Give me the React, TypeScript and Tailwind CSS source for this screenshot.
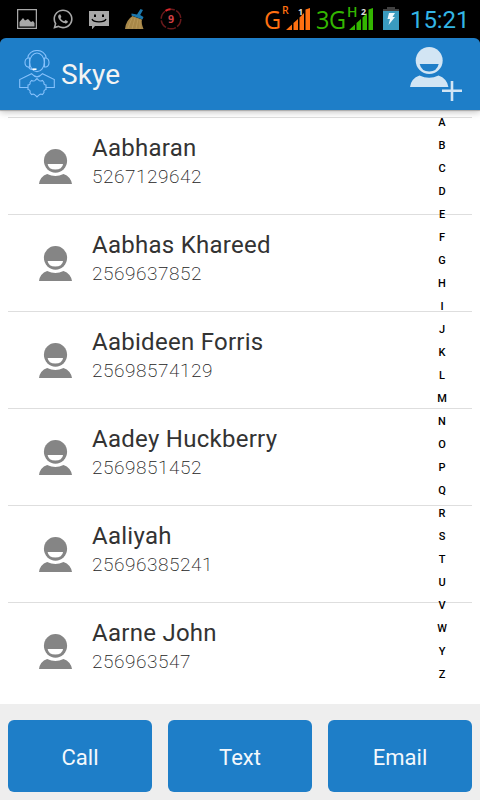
import { FaWhatsapp } from "react-icons/fa";

const contacts = [
  { name: "Aabharan", phone: "5267129642" },
  { name: "Aabhas Khareed", phone: "2569637852" },
  { name: "Aabideen Forris", phone: "25698574129" },
  { name: "Aadey Huckberry", phone: "2569851452" },
  { name: "Aaliyah", phone: "25696385241" },
  { name: "Aarne John", phone: "256963547" },
];

const letters = "ABCDEFGHIJKLMNOPQRSTUVWYZ".split("");
const actions = ["Call", "Text", "Email"];

function SignalBars({ className }: { className: string }) {
  return (
    <svg width="24" height="22" viewBox="0 0 24 22" className={className} fill="currentColor">
      <path d="M0 22 6 16.5V22ZM7.5 15 12 11V22H7.5ZM13.5 9.5 18 5V22H13.5ZM19.5 1.5 24 0V22H19.5Z" />
    </svg>
  );
}

function StatusBar() {
  return (
    <div className="flex h-[38px] shrink-0 items-start bg-black">
      <div className="flex gap-4 pt-[9px] pl-[17px] text-[#a8a8a8]">
        <svg width="20" height="20" viewBox="0 0 20 20">
          <path d="M.6.6H19.4V19.4H.6Z" fill="none" stroke="currentColor" strokeWidth="1.3" />
          <path d="M2.5 17.5V13L6 9 8 11.5 11 10 14 13 16 12 17.5 14V17.5Z" fill="currentColor" />
        </svg>
        <FaWhatsapp size={22} className="-mx-px -mt-px" />
        <svg width="20" height="20" viewBox="0 0 20 20">
          <path d="M0 2H20V17H6L3 20.5V17H0Z" fill="currentColor" />
          <path d="M3 10Q4 12.8 10 12.8T17 10" fill="none" stroke="#000" strokeWidth="1.3" />
          <path d="M5 5.5H7V8H5ZM13 5.5H15V8H13Z" fill="#000" />
        </svg>
        <svg width="20" height="20" viewBox="0 0 20 20">
          <path d="M7.5 7 17 10.5Q16 14 18.5 20H0Q1 11 7.5 7Z" fill="#a78748" />
          <path d="M7 9 3 19M10 9 7 20M13 10 11 20M15 11 15 20" stroke="#c2a263" strokeWidth="0.6" fill="none" />
          <path d="M6.5 4.5 12 5.5 15.5 0 18 1 15.2 6 18.5 8 17.5 10.5 6.5 6.5Z" fill="#1b78ad" />
        </svg>
        <div className="relative -ml-px grid size-[22px] place-items-center">
          <svg width="22" height="22" viewBox="0 0 22 22" className="absolute -top-px left-0">
            <circle cx="11" cy="11" r="9.8" fill="none" stroke="#68191b" strokeWidth="1.5" strokeDasharray="8.7 1.56" />
            <path d="M5.5 2.8Q8 1.2 10.5 1.2" fill="none" stroke="#d8282c" strokeWidth="2" />
          </svg>
          <span className="relative -top-px font-['DejaVu_Sans_Mono',monospace] text-[11px] leading-none font-bold text-[#cf4144]">9</span>
        </div>
      </div>
      <div className="ml-auto flex h-full">
        <div className="relative w-[52px] text-[#ff7011]">
          <span className="block origin-left scale-x-[0.92] pt-[6px] font-['Open_Sans',sans-serif] text-[25.5px] leading-[26px] font-medium">G</span>
          <span className="absolute top-[5px] left-[18px] font-['Open_Sans',sans-serif] text-[10.5px] leading-[10px] font-semibold">R</span>
          <SignalBars className="absolute top-2 left-[22px]" />
          <span className="absolute top-[7px] left-[34px] font-['Open_Sans',sans-serif] text-[9px] leading-[9px] font-bold text-[#ddd]">1</span>
        </div>
        <div className="relative w-[67px] text-[#33b600]">
          <span className="block origin-left scale-x-[0.92] pt-[6px] font-['Open_Sans',sans-serif] text-[25.5px] leading-[26px] font-medium tracking-[-0.4px]">3G</span>
          <span className="absolute top-[6px] left-[31px] font-['Open_Sans',sans-serif] text-[14px] leading-[12px] font-semibold">H</span>
          <SignalBars className="absolute top-2 left-[33px]" />
          <span className="absolute top-[7px] left-[45px] font-['Open_Sans',sans-serif] text-[9px] leading-[9px] font-bold text-[#ddd]">2</span>
        </div>
        <svg width="16" height="24" viewBox="0 0 16 24" className="mt-[7px]">
          <path d="M4 0H12V2H16V5H0V2H4Z" fill="#414141" />
          <path d="M0 4H16V23H0Z" fill="#3a9bbf" />
          <path d="M6 6H12L9.5 10H12L5.5 18 7 12H4.5Z" fill="#eef8fc" />
        </svg>
        <span className="mr-[11px] ml-[11px] w-[59px] pt-[7px] text-[24px] leading-[26px] tracking-[-0.1px] whitespace-nowrap text-[#33b5e5]">15:21</span>
      </div>
    </div>
  );
}

function AgentLogo() {
  return (
    <svg width="36" height="48" viewBox="0 0 36 48" fill="none" stroke="#86c1fb" strokeWidth="1.1">
      <ellipse cx="18" cy="12.3" rx="7.3" ry="9.3" />
      <path d="M8.7 8C10-2 26-2 27.3 8M10.5 8H9C5 9 5 16 9 17H10.5ZM25.5 8H27C31 9 31 16 27 17H25.5ZM9.5 17Q11 20 15 19.5" />
      <path d="M13.5 19.2H17.5" stroke="#fff" strokeWidth="1.6" />
      <path d="M9 37.5H.7V29.5L12.5 23.7Q18 30 23.5 23.7L35.3 29.5V37.5H27" />
      <path d="M16.5 30 18 28.5 19.5 30Q21 31.8 23.5 30.5L25 32.5Q24.3 34.5 27 35V39.5Q24.3 40 25 42.5L23.5 44.5Q21 43.3 19.5 45.5L18 47 16.5 45.5Q15 43.3 12.5 44.5L11 42.5Q11.7 40 9 39.5V35Q11.7 34.5 11 32.5L12.5 30.5Q15 31.8 16.5 30Z" />
    </svg>
  );
}

function PersonShape() {
  return (
    <>
      <ellipse cx="19.2" cy="13.5" rx="13.5" ry="13.5" />
      <path d="M0 40Q1 31.5 9.5 28.5Q19.2 33 28.5 28.5Q37 31.5 38.4 40Z" />
    </>
  );
}

function Header() {
  return (
    <header className="relative z-10 flex h-[72px] shrink-0 items-start rounded-t-md bg-[#1e7ec8] pl-[19px] shadow-[0_1px_1px_#aaa,0_2px_7px_rgba(0,0,0,0.25)]">
      <div className="pt-3">
        <AgentLogo />
      </div>
      <h1 className="pt-[21px] pl-[6px] text-[28px] leading-8 tracking-[0.1px] text-[#f3f3f3]">Skye</h1>
      <svg width="54" height="56" viewBox="0 0 54 56" className="mt-[9px] mr-4 ml-auto" fill="#d2e5f4">
        <PersonShape />
        <path d="M9.7 17H28.7Q27 24.5 19.2 24.5T9.7 17Z" fill="#1e7ec8" />
        <path d="M32 42.5H40.7V34H43.3V42.5H52V45.1H43.3V54H40.7V45.1H32Z" stroke="#1e7ec8" strokeWidth="1.5" paintOrder="stroke" />
      </svg>
    </header>
  );
}

function ContactRow({ name, phone }: { name: string; phone: string }) {
  return (
    <li className="flex h-[97px] border-t border-[#dedede]">
      <svg width="33" height="35" viewBox="0 0 38.4 40" preserveAspectRatio="none" className="mt-[31px] ml-[31px]" fill="#858585">
        <PersonShape />
        <path d="M10 17H28Q27 23.5 19 23.5T10 17Z" fill="#fff" />
      </svg>
      <div className="pt-[15px] pl-5">
        <div className="text-[24px] leading-[30px] tracking-[0.27px] text-[#333]">{name}</div>
        <div className="text-[19px] leading-[27px] font-[200] tracking-[0.55px] text-[#222]">{phone}</div>
      </div>
    </li>
  );
}

export default function App() {
  return (
    <div className="flex h-[800px] w-[480px] flex-col overflow-hidden bg-black font-[Roboto,sans-serif]">
      <StatusBar />
      <Header />
      <main className="relative h-[594px] shrink-0 bg-white px-2 pt-[7px]">
        <ul>
          {contacts.map((contact) => (
            <ContactRow key={contact.name} {...contact} />
          ))}
        </ul>
        <nav className="absolute top-[1px] right-[28px] flex w-5 flex-col text-center text-[11px] leading-[23px] font-medium text-black">
          {letters.map((letter) => (
            <span key={letter}>{letter}</span>
          ))}
        </nav>
      </main>
      <footer className="grid flex-1 grid-cols-3 gap-4 bg-[#eee] px-2 pt-4 pb-2">
        {actions.map((action) => (
          <button key={action} className="rounded-md bg-[#1e7ec8] pt-[3px] text-[22px] text-[#f3f8fc]">
            {action}
          </button>
        ))}
      </footer>
    </div>
  );
}
